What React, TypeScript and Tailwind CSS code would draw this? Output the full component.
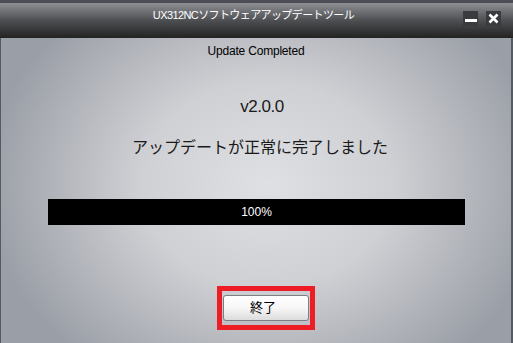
export default function App() {
  return (
    <div
      className="w-[513px] h-[343px] overflow-hidden flex flex-col bg-[#555b63]"
      style={{ fontFamily: '"Liberation Sans", "Noto Sans CJK JP", sans-serif' }}
    >
      {/* title bar */}
      <div className="h-[38px] shrink-0 border-t-[3px] border-[#4b4e55] bg-gradient-to-b from-[#8e9095] via-[#4e4f52] to-[#232323] relative flex items-start justify-center">
        <span className="mt-[5px] ml-[-6px] text-[11px] leading-[14px] text-white tracking-[-0.6px]">
          UX312NCソフトウェアアップデートツール
        </span>
        <div className="absolute right-[12px] top-[8px] flex gap-[8px]">
          <div className="w-[15px] h-[15px] bg-[#3a3b3e] flex items-end justify-center pb-[4px]">
            <div className="w-[12px] h-[3px] bg-white" />
          </div>
          <div className="w-[15px] h-[15px] bg-[#3a3b3e] flex items-center justify-center">
            <svg width="11" height="11" viewBox="0 0 11 11">
              <path d="M1.5 1.5 L9.5 9.5 M9.5 1.5 L1.5 9.5" stroke="white" strokeWidth="2.6" />
            </svg>
          </div>
        </div>
      </div>

      {/* body */}
      <div className="flex-1 ml-[1px] mr-[2px] flex flex-col items-center text-black bg-[radial-gradient(ellipse_55%_75%_at_52%_48%,#dfe0e3_0%,#cfd0d4_45%,#9a9ea6_100%)]">
        <div className="mt-[6px] text-[12px] leading-[14px] tracking-[-0.2px]">Update Completed</div>
        <div className="mt-[39px] ml-[12px] text-[17px] leading-[20px] tracking-[-0.5px] text-[#1a1a1a]">v2.0.0</div>
        <div className="mt-[21px] ml-[8px] text-[16px] leading-[20px] text-[#1a1a1a]">
          アップデートが正常に完了しました
        </div>
        <div className="mt-[41px] w-[417px] h-[26px] bg-black text-white text-[12px] flex items-center justify-center ml-[1px]">
          100%
        </div>
        <div className="mt-[61px] border-[5px] border-[#ee1c24] px-[1px] pt-[4px] pb-[4px] ml-[20px]">
          <button className="w-[86px] h-[26px] rounded-[3px] border border-[#7d7f83] bg-gradient-to-b from-white via-[#f7f7f7] to-[#dcdcdc] text-[13px] leading-[14px] text-black flex items-center justify-center pr-[6px]">
            終了
          </button>
        </div>
      </div>
    </div>
  );
}
